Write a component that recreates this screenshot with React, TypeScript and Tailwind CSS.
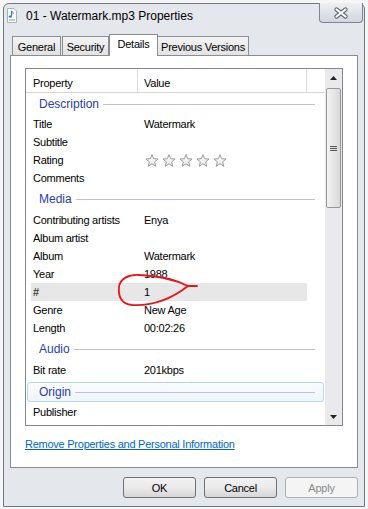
import React from "react";

const font = "font-['Liberation_Sans',Arial,sans-serif]";

function Star() {
  return (
    <svg width="14" height="13" viewBox="0 0 14 13">
      <defs>
        <linearGradient id="sg" x1="0" y1="0" x2="0" y2="1">
          <stop offset="0" stopColor="#ffffff" />
          <stop offset="1" stopColor="#e6e6e6" />
        </linearGradient>
      </defs>
      <polygon
        points="7,0.6 8.65,4.73 13.1,4.99 9.66,7.87 10.8,12.3 7,9.8 3.2,12.3 4.34,7.87 0.9,4.99 5.35,4.73"
        fill="url(#sg)"
        stroke="#9c9c9c"
        strokeWidth="1"
        strokeLinejoin="round"
      />
    </svg>
  );
}

function Row({ label, value, selected }: { label: string; value?: React.ReactNode; selected?: boolean }) {
  return (
    <div
      className={`ml-[5px] w-[276px] h-[18px] shrink-0 flex items-center pl-[2px] text-[11px] leading-[14px] tracking-[-0.25px] text-black ${
        selected ? "bg-[#e7e7e7]" : ""
      }`}
    >
      <div className="w-[111px] shrink-0 whitespace-nowrap">{label}</div>
      <div className="whitespace-nowrap">{value}</div>
    </div>
  );
}

function Group({ label, h = "h-[24px]" }: { label: string; h?: string }) {
  return (
    <div className={`${h} shrink-0 flex items-center pl-[13px] pr-[10px]`}>
      <span className="text-[12px] leading-[14px] text-[#2b3cad] whitespace-nowrap">{label}</span>
      <div className="flex-1 h-px bg-[#bcc0dc] ml-[4px]" />
    </div>
  );
}

function Tab({ label, w, selected, extra = "" }: { label: string; w: string; selected?: boolean; extra?: string }) {
  if (selected) {
    return (
      <div
        className={`${w} ${extra} h-[22px] relative z-20 bg-white border-t border-l border-r border-[#898c95] flex justify-center pt-[2px] text-[11px] leading-[14px] tracking-[-0.25px] text-black`}
      >
        {label}
      </div>
    );
  }
  return (
    <div
      className={`${w} ${extra} h-[19px] mb-px bg-gradient-to-b from-[#f4f4f4] to-[#e2e2e2] border border-[#8c8e94] border-b-0 flex justify-center pt-[3px] text-[11px] leading-[14px] tracking-[-0.25px] text-black`}
    >
      {label}
    </div>
  );
}

function Button({ label, disabled }: { label: string; disabled?: boolean }) {
  return (
    <div
      className={`w-[73px] h-[21px] rounded-[3px] border flex items-center justify-center text-[11px] leading-[14px] tracking-[-0.25px] ${
        disabled
          ? "border-[#adb2b5] bg-[#f4f4f4] text-[#8a8a8a]"
          : "border-[#707070] bg-gradient-to-b from-[#f2f2f2] via-[#ebebeb] to-[#d6d6d6] text-black"
      }`}
    >
      {label}
    </div>
  );
}

export default function App() {
  return (
    <div className={`relative w-[368px] h-[509px] bg-[#f6f6f6] pt-[3px] pl-[3px] overflow-hidden ${font}`}>
      <div className="w-[362px] h-[504px] border border-[#6e7885] rounded-t-[6px] bg-[#e4e7eb] flex flex-col">
        {/* title bar */}
        <div className="h-[30px] flex items-start shrink-0">
          <div className="ml-[3px] mt-[4px]">
            <svg width="10" height="15" viewBox="0 0 10 15">
              <path d="M0.5 0.5 H7 L9.5 3 V14.5 H0.5 Z" fill="#fdfdfd" stroke="#a9b0b8" />
              <path d="M4.5 3 V8.2" stroke="#2f7fd6" strokeWidth="1.2" />
              <ellipse cx="3.3" cy="8.6" rx="1.6" ry="1.2" fill="#2f7fd6" />
              <path d="M4.5 3 Q6.5 4 6.2 6" stroke="#2f7fd6" strokeWidth="1" fill="none" />
              <path d="M2 12 H8" stroke="#8b96a3" strokeWidth="1" />
            </svg>
          </div>
          <div className="ml-[9px] mt-[5px] text-[12px] leading-[14px] text-black whitespace-nowrap">
            01 - Watermark.mp3 Properties
          </div>
          <div className="ml-auto mr-[1px] -mt-px w-[44px] h-[20px] rounded-b-[4px] border border-[#7d858f] border-t-0 bg-gradient-to-b from-[#eef0f3] to-[#d2d7de] flex items-center justify-center">
            <svg width="16" height="12" viewBox="0 0 16 12">
              <path d="M3.5 2.5 L12.5 9.5 M12.5 2.5 L3.5 9.5" stroke="#5f656d" strokeWidth="4.2" strokeLinecap="round" />
              <path d="M3.5 2.5 L12.5 9.5 M12.5 2.5 L3.5 9.5" stroke="#ffffff" strokeWidth="2.2" strokeLinecap="round" />
            </svg>
          </div>
        </div>

        {/* body */}
        <div className="pl-[6px] flex flex-col">
          {/* tabs */}
          <div className="h-[22px] flex items-end pl-[2px] -mb-px relative z-10">
            <Tab label="General" w="w-[49px]" />
            <Tab label="Security" w="w-[47px]" extra="ml-[1px]" />
            <Tab label="Details" w="w-[49px]" selected />
            <Tab label="Previous Versions" w="w-[92px]" extra="-ml-px" />
          </div>

          {/* panel */}
          <div className="w-[348px] h-[413px] bg-white border border-[#898c95] flex flex-col">
            <div className="ml-[14px] mt-[12px] w-[318px] h-[358px] border border-[#828790] flex bg-white">
              <div className="w-[299px] flex flex-col overflow-hidden">
                {/* header */}
                <div className="h-[24px] shrink-0 border-b border-[#d5d5d5] flex text-[11px] leading-[14px] tracking-[-0.25px] text-black">
                  <div className="w-[112px] pl-[7px] pt-[7px] border-r border-[#dedede]">Property</div>
                  <div className="w-[169px] pl-[6px] pt-[7px] border-r border-[#dedede]">Value</div>
                  <div className="flex-1" />
                </div>
                <Group label="Description" h="h-[22px]" />
                <Row label="Title" value="Watermark" />
                <Row label="Subtitle" />
                <Row
                  label="Rating"
                  value={
                    <div className="flex gap-[3px] ml-px">
                      <Star />
                      <Star />
                      <Star />
                      <Star />
                      <Star />
                    </div>
                  }
                />
                <Row label="Comments" />
                <Group label="Media" />
                <Row label="Contributing artists" value="Enya" />
                <Row label="Album artist" />
                <Row label="Album" value="Watermark" />
                <Row label="Year" value="1988" />
                <Row label="#" value="1" selected />
                <Row label="Genre" value="New Age" />
                <Row label="Length" value="00:02:26" />
                <Group label="Audio" />
                <Row label="Bit rate" value="201kbps" />
                <div className="h-[24px] shrink-0 pt-[3px] pb-px px-px">
                  <div className="h-[20px] rounded-[3px] border border-[#b9d5f5] bg-gradient-to-b from-[#fbfdff] to-[#eef5fd] flex items-center pl-[11px] pr-[8px]">
                    <span className="text-[12px] leading-[14px] text-[#2b3cad]">Origin</span>
                    <div className="flex-1 h-px bg-[#bcc0dc] ml-[4px]" />
                  </div>
                </div>
                <Row label="Publisher" />
              </div>
              {/* scrollbar */}
              <div className="w-[17px] bg-[#eaeaed] flex flex-col items-center">
                <div className="h-[18px] w-full flex items-center justify-center">
                  <svg width="7" height="4" viewBox="0 0 7 4">
                    <polygon points="3.5,0 7,4 0,4" fill="#222" />
                  </svg>
                </div>
                <div className="mt-px w-[15px] h-[120px] rounded-[2px] border border-[#979797] bg-gradient-to-r from-[#f3f3f3] to-[#d9d9d9] flex items-center justify-center">
                  <div className="flex flex-col gap-[1px]">
                    <div className="w-[7px] h-px bg-[#555]" />
                    <div className="w-[7px] h-px bg-[#555]" />
                    <div className="w-[7px] h-px bg-[#555]" />
                  </div>
                </div>
                <div className="flex-1" />
                <div className="h-[17px] w-full flex items-center justify-center">
                  <svg width="7" height="4" viewBox="0 0 7 4">
                    <polygon points="0,0 7,0 3.5,4" fill="#222" />
                  </svg>
                </div>
              </div>
            </div>
            <div className="ml-[14px] mt-[11px] text-[11px] leading-[14px] tracking-[-0.25px] text-[#0066cc] underline">
              Remove Properties and Personal Information
            </div>
          </div>

          {/* buttons */}
          <div className="mt-[9px] w-[348px] flex justify-end gap-[8px]">
            <Button label="OK" />
            <Button label="Cancel" />
            <Button label="Apply" disabled />
          </div>
        </div>
      </div>

      {/* red annotation */}
      <svg className="absolute left-0 top-0 pointer-events-none" width="368" height="509">
        <path
          d="M197 286 L188 286 C178 281 160 276 140 275 C128 274 120 279 119 287 C118 296 121 304 132 305 C150 306 170 300 188 286"
          fill="none"
          stroke="#e8141c"
          strokeWidth="1.8"
          strokeLinecap="round"
        />
      </svg>
    </div>
  );
}
